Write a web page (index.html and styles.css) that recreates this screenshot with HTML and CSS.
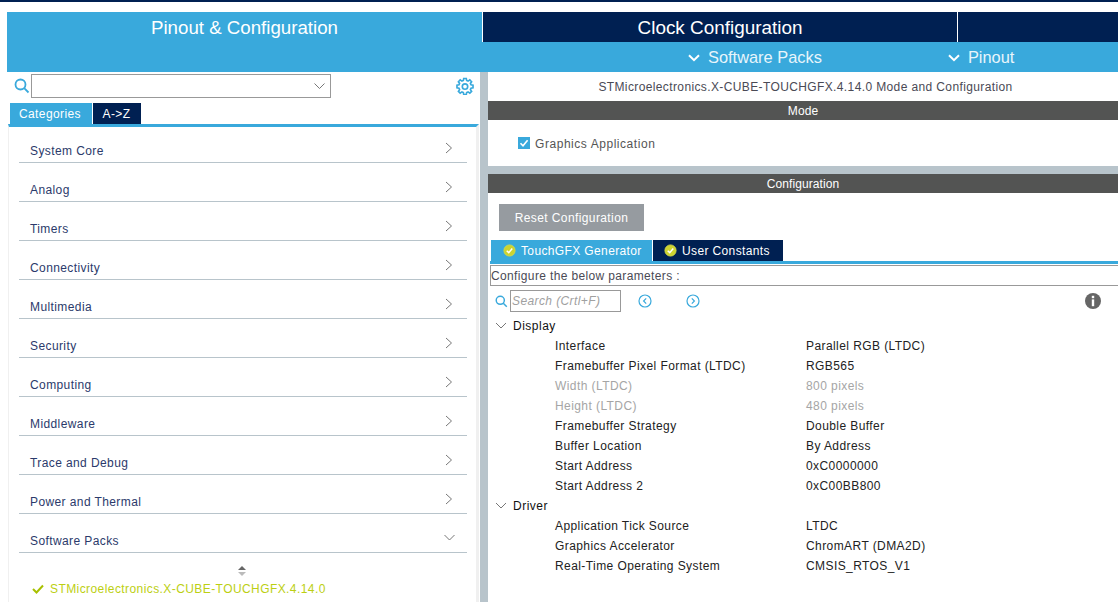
FILE: index.html
```html
<!DOCTYPE html>
<html lang="en">
<head>
<meta charset="utf-8">
<title>Pinout &amp; Configuration</title>
<link rel="stylesheet" href="styles.css">
</head>
<body>
<div class="topstrip"></div>
<header class="header">
  <div class="h-pinout">Pinout &amp; Configuration</div>
  <div class="h-right">
    <div class="h-tabs">
      <div class="h-clock">Clock Configuration</div>
      <div class="h-blank"></div>
    </div>
    <div class="h-sub">
      <div class="h-sub-item h-sub-sp"><svg class="sub-chev" viewBox="0 0 12 8"><path d="M1 1.2 6 6.2 11 1.2"/></svg>Software Packs</div>
      <div class="h-sub-item h-sub-pin"><svg class="sub-chev" viewBox="0 0 12 8"><path d="M1 1.2 6 6.2 11 1.2"/></svg>Pinout</div>
    </div>
  </div>
</header>
<main class="main">
  <aside class="left">
    <div class="searchrow">
      <svg class="search-ic" viewBox="0 0 16 16"><circle cx="6.5" cy="6.5" r="5"/><path d="M10.2 10.2 14.5 14.5"/></svg>
      <div class="combo"><svg class="combo-chev" viewBox="0 0 12 8"><path d="M1 1.5 6 6.5 11 1.5"/></svg></div>
      <svg class="gear" viewBox="0 0 24 24"><path d="M10.3 2h3.4l.5 2.7 1.9.8 2.3-1.6 2.4 2.4-1.6 2.3.8 1.9 2.7.5v3.4l-2.7.5-.8 1.9 1.6 2.3-2.4 2.4-2.3-1.6-1.9.8-.5 2.7h-3.4l-.5-2.7-1.9-.8-2.3 1.6-2.4-2.4 1.6-2.3-.8-1.9-2.7-.5v-3.4l2.7-.5.8-1.9-1.6-2.3 2.4-2.4 2.3 1.6 1.9-.8z"/><circle cx="12" cy="12.7" r="3.6"/></svg>
    </div>
    <div class="lefttabs">
      <div class="ltab ltab-on">Categories</div>
      <div class="ltab ltab-off">A-&gt;Z</div>
    </div>
    <div class="catlist">
      <div class="cat"><span>System Core</span><svg class="cat-chev" viewBox="0 0 8 12"><path d="M1 1 6.5 6 1 11"/></svg></div>
      <div class="cat"><span>Analog</span><svg class="cat-chev" viewBox="0 0 8 12"><path d="M1 1 6.5 6 1 11"/></svg></div>
      <div class="cat"><span>Timers</span><svg class="cat-chev" viewBox="0 0 8 12"><path d="M1 1 6.5 6 1 11"/></svg></div>
      <div class="cat"><span>Connectivity</span><svg class="cat-chev" viewBox="0 0 8 12"><path d="M1 1 6.5 6 1 11"/></svg></div>
      <div class="cat"><span>Multimedia</span><svg class="cat-chev" viewBox="0 0 8 12"><path d="M1 1 6.5 6 1 11"/></svg></div>
      <div class="cat"><span>Security</span><svg class="cat-chev" viewBox="0 0 8 12"><path d="M1 1 6.5 6 1 11"/></svg></div>
      <div class="cat"><span>Computing</span><svg class="cat-chev" viewBox="0 0 8 12"><path d="M1 1 6.5 6 1 11"/></svg></div>
      <div class="cat"><span>Middleware</span><svg class="cat-chev" viewBox="0 0 8 12"><path d="M1 1 6.5 6 1 11"/></svg></div>
      <div class="cat"><span>Trace and Debug</span><svg class="cat-chev" viewBox="0 0 8 12"><path d="M1 1 6.5 6 1 11"/></svg></div>
      <div class="cat"><span>Power and Thermal</span><svg class="cat-chev" viewBox="0 0 8 12"><path d="M1 1 6.5 6 1 11"/></svg></div>
      <div class="cat"><span>Software Packs</span><svg class="cat-chev-d" viewBox="0 0 12 8"><path d="M1 1 6 6 11 1"/></svg></div>
      <div class="sorter"><svg viewBox="0 0 8 12"><path class="s-up" d="M4 1 8 5H0z"/><path class="s-dn" d="M0 7H8L4 11z"/></svg></div>
      <div class="pack"><svg class="pack-check" viewBox="0 0 12 10"><path d="M1 5 4.5 8.5 11 1.5"/></svg>STMicroelectronics.X-CUBE-TOUCHGFX.4.14.0</div>
    </div>
  </aside>
  <div class="splitter"></div>
  <section class="right">
    <div class="r-title">STMicroelectronics.X-CUBE-TOUCHGFX.4.14.0 Mode and Configuration</div>
    <div class="bar">Mode</div>
    <div class="mode">
      <span class="chk"><svg viewBox="0 0 12 12"><path d="M2.5 6.2 5 8.8 9.6 3.2"/></svg></span>Graphics Application
    </div>
    <div class="hsplit"></div>
    <div class="bar">Configuration</div>
    <div class="cfg">
      <div class="reset">Reset Configuration</div>
      <div class="cfgtabs">
        <div class="ctab ctab-on"><svg class="ok" viewBox="0 0 14 14"><circle cx="7" cy="7" r="6"/><path d="M4 7.2 6.2 9.3 10 4.8"/></svg>TouchGFX Generator</div>
        <div class="ctab ctab-off"><svg class="ok" viewBox="0 0 14 14"><circle cx="7" cy="7" r="6"/><path d="M4 7.2 6.2 9.3 10 4.8"/></svg>User Constants</div>
      </div>
      <div class="params">Configure the below parameters :</div>
      <div class="toolrow">
        <svg class="search-ic small" viewBox="0 0 16 16"><circle cx="6.5" cy="6.5" r="5"/><path d="M10.2 10.2 14.5 14.5"/></svg>
        <div class="psearch">Search (Crtl+F)</div>
        <svg class="nav nav-prev" viewBox="0 0 14 14"><circle cx="7" cy="7" r="6"/><path d="M8.2 4.4 5.6 7 8.2 9.6"/></svg>
        <svg class="nav nav-next" viewBox="0 0 14 14"><circle cx="7" cy="7" r="6"/><path d="M5.8 4.4 8.4 7 5.8 9.6"/></svg>
        <svg class="info" viewBox="0 0 16 16"><circle cx="8" cy="8" r="8"/><rect x="6.8" y="2.8" width="2.4" height="2.4"/><rect x="6.8" y="6.4" width="2.4" height="6.8"/></svg>
      </div>
      <div class="tree">
        <div class="group"><svg class="tree-chev" viewBox="0 0 12 8"><path d="M1 1 6 6 11 1"/></svg>Display</div>
        <div class="prop"><span>Interface</span><span>Parallel RGB (LTDC)</span></div>
        <div class="prop"><span>Framebuffer Pixel Format (LTDC)</span><span>RGB565</span></div>
        <div class="prop off"><span>Width (LTDC)</span><span>800 pixels</span></div>
        <div class="prop off"><span>Height (LTDC)</span><span>480 pixels</span></div>
        <div class="prop"><span>Framebuffer Strategy</span><span>Double Buffer</span></div>
        <div class="prop"><span>Buffer Location</span><span>By Address</span></div>
        <div class="prop"><span>Start Address</span><span>0xC0000000</span></div>
        <div class="prop"><span>Start Address 2</span><span>0xC00BB800</span></div>
        <div class="group"><svg class="tree-chev" viewBox="0 0 12 8"><path d="M1 1 6 6 11 1"/></svg>Driver</div>
        <div class="prop"><span>Application Tick Source</span><span>LTDC</span></div>
        <div class="prop"><span>Graphics Accelerator</span><span>ChromART (DMA2D)</span></div>
        <div class="prop"><span>Real-Time Operating System</span><span>CMSIS_RTOS_V1</span></div>
      </div>
    </div>
  </section>
</main>
</body>
</html>
```
FILE: styles.css
```css
* { box-sizing: border-box; }
html, body { margin: 0; height: 602px; overflow: hidden; }
body { background: #fff; font-family: "Liberation Sans", Arial, sans-serif; font-size: 12px; color: #333; }
svg { display: block; flex: none; fill: none; }

.topstrip { height: 2px; background: #002052; }

.header { display: flex; height: 60px; margin: 10px 0 0 7px; color: #fff; }
.h-pinout { width: 475px; background: #39a9dc; font-size: 18.7px; line-height: 30px; text-align: center; padding-top: 1px; }
.h-right { flex: 1; display: flex; flex-direction: column; }
.h-tabs { display: flex; height: 30px; background: #002052; }
.h-clock { width: 476px; font-size: 18.9px; line-height: 30px; text-align: center; padding-top: 1px; border-left: 1px solid #fff; border-right: 1px solid #fff; }
.h-blank { flex: 1; }
.h-sub { display: flex; height: 30px; background: #39a9dc; font-size: 16.4px; padding-top: 1px; }
.h-sub-item { display: flex; align-items: center; gap: 8px; }
.h-sub-sp { margin-left: 206px; color: #e8f5fb; }
.h-sub-pin { margin-left: 126px; color: #e8f5fb; }
.sub-chev { width: 12px; height: 8px; }
.sub-chev path { stroke: #fff; stroke-width: 2; }

.main { display: flex; height: 530px; }
.left { width: 480px; flex: none; display: flex; flex-direction: column; }
.splitter { width: 8px; flex: none; background: #b8c4cb; }
.right { flex: 1; min-width: 0; display: flex; flex-direction: column; }

.searchrow { display: flex; align-items: center; height: 30px; padding: 2px 0 4px 14px; }
.search-ic { width: 16px; height: 16px; margin-right: 1px; }
.search-ic circle, .search-ic path { stroke: #39a9dc; stroke-width: 1.8; }
.combo { width: 300px; height: 24px; border: 1px solid #999; display: flex; align-items: center; justify-content: flex-end; padding-right: 4px; }
.combo-chev { width: 13px; height: 8px; }
.combo-chev path { stroke: #777; stroke-width: 1; }
.gear { width: 18px; height: 18px; margin-left: auto; margin-right: 6px; }
.gear path, .gear circle { stroke: #39a9dc; stroke-width: 2.2; }

.lefttabs { display: flex; margin: 1px 0 0 10px; height: 21px; gap: 1px; }
.ltab { color: #fff; font-size: 12px; letter-spacing: .4px; display: flex; align-items: center; justify-content: center; }
.ltab-on { width: 82px; background: #39a9dc; padding-right: 2px; }
.ltab-off { width: 48px; background: #002052; padding-right: 1px; }

.catlist { flex: 1; margin-left: 8px; width: 471px; padding: 0 9px 0 10px; border-top: 3px solid #39a9dc; border-left: 1px solid #f0f0f0; border-right: 3px solid #f0f0f0; }
.cat { height: 39px; border-bottom: 1px solid #b8c4cb; display: flex; align-items: flex-end; justify-content: space-between; padding: 0 14px 4px 11px; color: #2b3a6b; font-size: 12px; letter-spacing: .4px; }
.cat:first-child { height: 36px; }
.cat span { line-height: 14px; }
.cat-chev { width: 8px; height: 12px; margin-bottom: 4px; }
.cat-chev path, .cat-chev-d path { stroke: #777; stroke-width: 1; }
.cat-chev-d { width: 13px; height: 8px; margin: 0 -3px 6px 0; }
.sorter { display: flex; justify-content: center; padding-top: 12px; height: 27px; margin-right: 2px; }
.sorter svg { width: 8px; height: 12px; }
.s-up { fill: #666; }
.s-dn { fill: #bbb; }
.pack { display: flex; align-items: center; gap: 5px; padding-left: 12px; margin-top: 1px; height: 16px; color: #bccf13; font-size: 12px; letter-spacing: .42px; white-space: nowrap; }
.pack-check { width: 14px; height: 10px; }
.pack-check path { stroke: #a8c000; stroke-width: 2; }

.r-title { height: 29px; line-height: 31px; text-align: center; font-size: 12px; letter-spacing: .38px; color: #4a4a55; padding-left: 5px; }
.bar { height: 19px; line-height: 20px; background: #535453; color: #fff; text-align: center; font-size: 12px; flex: none; letter-spacing: .1px; }
.mode { height: 46px; display: flex; align-items: center; padding: 2px 0 0 30px; gap: 5px; font-size: 12px; color: #555; letter-spacing: .55px; }
.chk { width: 12px; height: 12px; background: #39a9dc; display: block; margin-top: -2px; }
.chk svg path { stroke: #fff; stroke-width: 1.6; }
.hsplit { height: 8px; background: #b8c4cb; flex: none; }

.cfg { flex: 1; display: flex; flex-direction: column; padding-top: 11px; }
.reset { width: 145px; height: 27px; margin-left: 11px; background: #969ba0; color: #fff; font-size: 12px; line-height: 28px; text-align: center; letter-spacing: .4px; }
.cfgtabs { display: flex; margin: 9px 0 0 3px; height: 21px; gap: 1px; border: 0; }
.ctab { color: #fff; font-size: 12px; letter-spacing: .37px; display: flex; align-items: center; gap: 5px; padding-left: 12px; }
.ctab-on { width: 161px; background: #39a9dc; }
.ctab-off { width: 130px; background: #002052; padding-left: 11px; }
.ok { width: 13px; height: 13px; }
.ok circle { fill: #cdd32f; stroke: #d3da4a; stroke-width: 1; }
.ok path { stroke: #fff; stroke-width: 1.6; }
.params { height: 25px; margin-left: 2px; border-top: 3px solid #39a9dc; box-shadow: inset 0 1px 0 #fff, inset 0 2px 0 #999, inset 0 -1px 0 #999, inset 1px 0 0 #999; line-height: 24px; padding-left: 1px; font-size: 12px; color: #4a4a55; letter-spacing: .36px; }
.toolrow { display: flex; align-items: center; height: 26px; margin-top: 2px; padding-left: 7px; }
.search-ic.small { width: 13px; height: 13px; margin-right: 2px; }
.psearch { width: 111px; height: 22px; border: 1px solid #999; line-height: 21px; padding-left: 1px; font-size: 12px; font-style: italic; color: #a0a0a0; letter-spacing: .4px; }
.nav { width: 14px; height: 14px; }
.nav circle, .nav path { stroke: #39a9dc; stroke-width: 1.2; }
.nav-prev { margin-left: 17px; }
.nav-next { margin-left: 34px; }
.info { width: 16px; height: 16px; margin-left: auto; margin-right: 17px; }
.info circle { fill: #666; }
.info rect { fill: #fff; }

.tree { display: flex; flex-direction: column; margin-top: 2px; }
.group { height: 20px; display: flex; align-items: center; gap: 6px; padding-left: 7px; font-size: 12px; letter-spacing: .5px; color: #111; }
.tree-chev { width: 12px; height: 8px; }
.tree-chev path { stroke: #777; stroke-width: 1; }
.prop { height: 20px; display: flex; align-items: center; padding-left: 67px; font-size: 12px; letter-spacing: .42px; color: #222; }
.prop span:first-child { width: 251px; flex: none; }
.prop.off { color: #a5a5a5; }
```
